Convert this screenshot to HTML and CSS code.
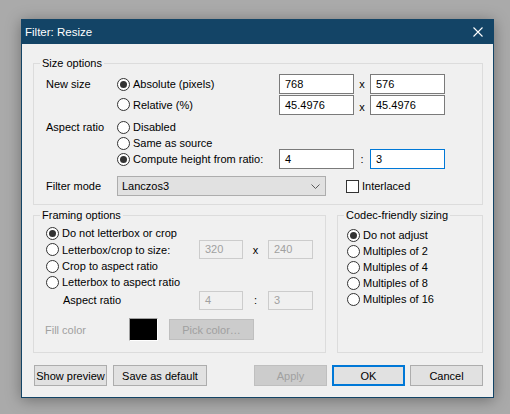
FILE: index.html
```html
<!DOCTYPE html>
<html>
<head>
<meta charset="utf-8">
<title>Filter: Resize</title>
<link rel="stylesheet" href="styles.css">
</head>
<body>
<div class="window">
  <div class="titlebar">
    <span class="title">Filter: Resize</span>
    <svg class="close" width="10" height="10" viewBox="0 0 10 10"><path d="M0.5 0.5 L9.5 9.5 M9.5 0.5 L0.5 9.5" stroke="#ffffff" stroke-width="1.1" fill="none"/></svg>
  </div>
  <div class="content">
    <fieldset class="group size-group">
      <legend>Size options</legend>
      <div class="size-grid">
        <span class="lbl r1 c1">New size</span>
        <label class="radio r1 c2"><span class="rb on"></span>Absolute (pixels)</label>
        <span class="field r1 c3">768</span>
        <span class="sep r1 c4">x</span>
        <span class="field r1 c5">576</span>

        <label class="radio r2 c2"><span class="rb"></span>Relative (%)</label>
        <span class="field r2 c3 at-end">45.4976</span>
        <span class="sep r2 c4 at-end">x</span>
        <span class="field r2 c5 at-end">45.4976</span>

        <span class="lbl r3 c1 at-end">Aspect ratio</span>
        <label class="radio r3 c2 at-end"><span class="rb"></span>Disabled</label>
        <label class="radio r4 c2"><span class="rb"></span>Same as source</label>
        <label class="radio r5 c2"><span class="rb on"></span>Compute height from ratio:</label>
        <span class="field r5 c3 squeeze">4</span>
        <span class="sep r5 c4">:</span>
        <span class="field r5 c5 squeeze focus">3</span>

        <span class="lbl mode-lbl r6 c1 at-end">Filter mode</span>
        <div class="mode-row r6 c2-5 at-end">
          <div class="combo"><span>Lanczos3</span><svg width="9" height="5" viewBox="0 0 9 5"><path d="M0.5 0.5 L4.5 4.5 L8.5 0.5" stroke="#5a5a5a" stroke-width="1" fill="none"/></svg></div>
          <label class="check"><span class="cb"></span>Interlaced</label>
        </div>
      </div>
    </fieldset>

    <div class="lower">
      <fieldset class="group frame-group">
        <legend>Framing options</legend>
        <div class="frame-grid">
          <label class="radio f1 all"><span class="rb on"></span>Do not letterbox or crop</label>
          <label class="radio f2 k1"><span class="rb"></span>Letterbox/crop to size:</label>
          <span class="field dis f2 k2">320</span>
          <span class="sep f2 k3">x</span>
          <span class="field dis f2 k4">240</span>
          <label class="radio f3 all"><span class="rb"></span>Crop to aspect ratio</label>
          <label class="radio f4 all"><span class="rb"></span>Letterbox to aspect ratio</label>
          <span class="lbl indent f5 k1">Aspect ratio</span>
          <span class="field dis f5 k2">4</span>
          <span class="sep f5 k3">:</span>
          <span class="field dis f5 k4">3</span>
          <div class="fill-row f6 all">
            <span class="fill-lbl">Fill color</span>
            <span class="swatch"></span>
            <span class="btn disabled pick">Pick color…</span>
          </div>
        </div>
      </fieldset>

      <fieldset class="group codec-group">
        <legend>Codec-friendly sizing</legend>
        <div class="codec-list">
          <label class="radio"><span class="rb on"></span>Do not adjust</label>
          <label class="radio"><span class="rb"></span>Multiples of 2</label>
          <label class="radio"><span class="rb"></span>Multiples of 4</label>
          <label class="radio"><span class="rb"></span>Multiples of 8</label>
          <label class="radio"><span class="rb"></span>Multiples of 16</label>
        </div>
      </fieldset>
    </div>

    <div class="buttons">
      <span class="btn w-preview">Show preview</span>
      <span class="btn w-save">Save as default</span>
      <span class="btn disabled w-std push">Apply</span>
      <span class="btn default w-std">OK</span>
      <span class="btn w-std">Cancel</span>
    </div>
  </div>
</div>
</body>
</html>
```

FILE: styles.css
```css
* { box-sizing: border-box; }
html, body { margin: 0; }
body {
  width: 510px;
  height: 414px;
  overflow: hidden;
  background: #aaaaaa;
  padding: 19px 0 0 21px;
  font-family: "Liberation Sans", Arial, sans-serif;
  font-size: 11px;
  color: #000;
}

.window {
  width: 473px;
  height: 379px;
  border: 1px solid #134466;
  background: #f0f0f0;
  box-shadow: 0 2px 14px rgba(0, 0, 0, 0.35);
  display: flex;
  flex-direction: column;
}

.titlebar {
  flex: none;
  height: 24px;
  background: #134466;
  color: #ffffff;
  font-size: 11.5px;
  display: flex;
  align-items: center;
  justify-content: space-between;
  padding: 0 10px 0 3px;
}

.content {
  flex: 1;
  display: flex;
  flex-direction: column;
  padding: 12px 10px 11px 11px;
}

.group {
  margin: 0;
  padding: 0;
  min-width: 0;
  border: 1px solid #dcdcdc;
}
.group legend {
  padding: 0 2px;
  margin-left: 6px;
  line-height: 14px;
}

.lbl { line-height: 16px; white-space: nowrap; }

.radio, .check {
  display: flex;
  align-items: center;
  gap: 3px;
  height: 16px;
  white-space: nowrap;
}
.rb {
  flex: none;
  width: 13px;
  height: 13px;
  border: 1px solid #333333;
  border-radius: 50%;
  background: #ffffff;
  display: flex;
  align-items: center;
  justify-content: center;
}
.rb.on::after {
  content: "";
  width: 7px;
  height: 7px;
  border-radius: 50%;
  background: #333333;
}
.cb {
  flex: none;
  width: 13px;
  height: 13px;
  border: 1px solid #333333;
  background: #ffffff;
}

.field {
  height: 20px;
  border: 1px solid #7a7a7a;
  background: #ffffff;
  padding-left: 5px;
  line-height: 18px;
  white-space: nowrap;
}
.field.focus { border-color: #0078d7; }
.field.dis {
  height: 19px;
  line-height: 17px;
  border-color: #cccccc;
  background: #f0f0f0;
  color: #a0a0a0;
}
.sep { text-align: center; line-height: 16px; }

/* Size options */
.size-grid {
  display: grid;
  grid-template-columns: 71px 162px 75px 16px 75px;
  grid-template-rows: 20px 21px 20px 16px 16px 29px;
  align-items: center;
  padding: 4px 0 8px 12px;
}
.r1 { grid-row: 1; }
.r2 { grid-row: 2; }
.r3 { grid-row: 3; }
.r4 { grid-row: 4; }
.r5 { grid-row: 5; }
.r6 { grid-row: 6; }
.c1 { grid-column: 1; }
.c2 { grid-column: 2; }
.c3 { grid-column: 3; }
.c4 { grid-column: 4; }
.c5 { grid-column: 5; }
.c2-5 { grid-column: 2 / 6; }
.at-end { align-self: end; }
.squeeze { margin: -2px 0; }
.mode-lbl { line-height: 20px; }

.mode-row {
  display: flex;
  align-items: center;
  gap: 20px;
}
.combo {
  width: 209px;
  height: 20px;
  border: 1px solid #adadad;
  background: #e1e1e1;
  display: flex;
  align-items: center;
  justify-content: space-between;
  padding: 0 5px 0 4px;
}

/* Lower groups */
.lower {
  display: flex;
  gap: 11px;
  margin-top: 3px;
}
.frame-group { width: 293px; flex: none; }
.codec-group { flex: 1; }

.frame-grid {
  display: grid;
  grid-template-columns: 153px 44px 25px 45px;
  grid-template-rows: 16px 17px 16px 16px 20px 31px;
  align-items: center;
  padding: 3px 0 11px 12px;
}
.f1 { grid-row: 1; }
.f2 { grid-row: 2; }
.f3 { grid-row: 3; }
.f4 { grid-row: 4; }
.f5 { grid-row: 5; }
.f6 { grid-row: 6; }
.k1 { grid-column: 1; }
.k2 { grid-column: 2; }
.k3 { grid-column: 3; }
.k4 { grid-column: 4; }
.all { grid-column: 1 / 5; }
.f2.field { margin: -1px 0; }
.indent { padding-left: 17px; }

.fill-row {
  align-self: end;
  display: flex;
  align-items: center;
}
.fill-lbl {
  width: 83px;
  margin-left: -1px;
  color: #a0a0a0;
}
.swatch {
  width: 29px;
  height: 23px;
  background: #000000;
  border: 1px solid;
  border-color: #a0a0a0 #ffffff #ffffff #a0a0a0;
  margin-left: 1px;
}
.pick {
  width: 85px;
  height: 19px;
  margin-left: 11px;
}

.codec-list {
  display: flex;
  flex-direction: column;
  padding: 5px 0 0 9px;
}

/* Buttons */
.buttons {
  display: flex;
  gap: 5px;
  margin-top: 12px;
  padding-left: 1px;
}
.btn {
  height: 21px;
  border: 1px solid #adadad;
  background: #e1e1e1;
  display: flex;
  align-items: center;
  justify-content: center;
  white-space: nowrap;
}
.btn.default { border: 2px solid #0078d7; }
.btn.disabled {
  background: #cccccc;
  border-color: #bfbfbf;
  color: #a0a0a0;
}
.w-preview { width: 73px; }
.w-save { width: 94px; margin-left: 1px; }
.w-std { width: 73px; }
.push { margin-left: auto; }
```
